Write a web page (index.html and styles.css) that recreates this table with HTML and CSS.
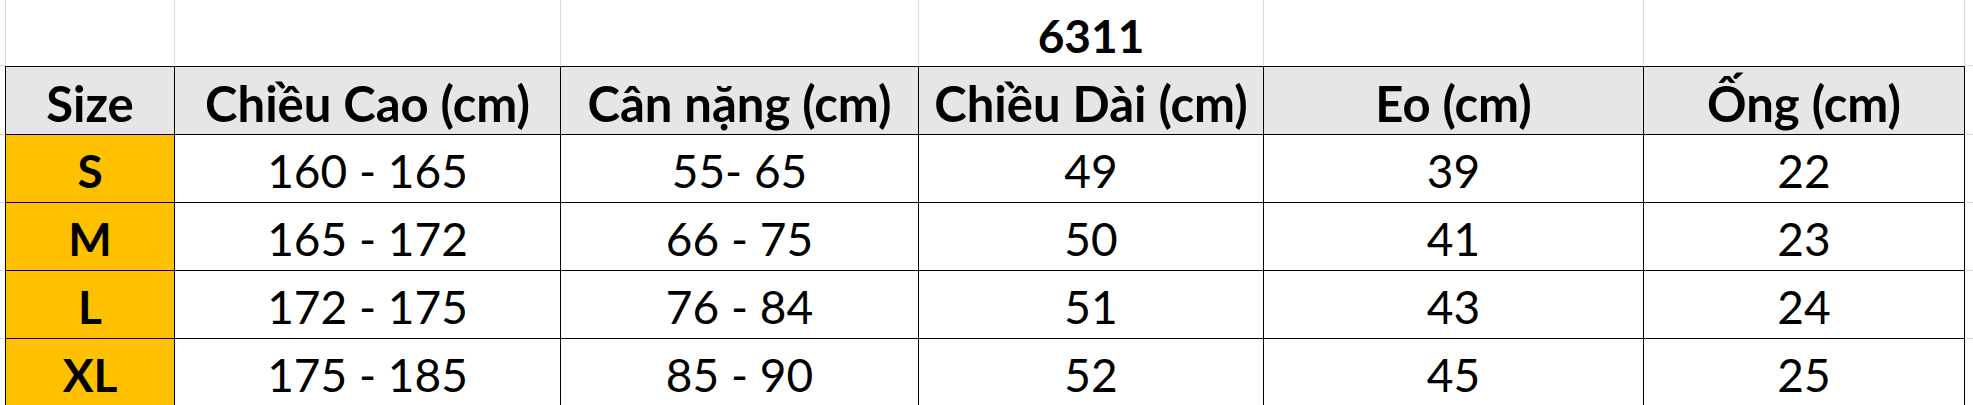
FILE: index.html
```html
<!DOCTYPE html>
<html lang="vi">
<head>
<meta charset="utf-8">
<title>6311 size chart</title>
<link rel="stylesheet" href="styles.css">
</head>
<body>
<div class="sheet">
  <div class="gut"></div>
  <div class="top top-first"></div>
  <div class="top"></div>
  <div class="top"></div>
  <div class="top title">6311</div>
  <div class="top"></div>
  <div class="top"></div>
  <div class="gut"></div>

  <div class="gut"></div>
  <div class="cell hdr first">Size</div>
  <div class="cell hdr">Chiều Cao (cm)</div>
  <div class="cell hdr">Cân nặng (cm)</div>
  <div class="cell hdr">Chiều Dài (cm)</div>
  <div class="cell hdr">Eo (cm)</div>
  <div class="cell hdr">Ống (cm)</div>
  <div class="gut"></div>

  <div class="gut"></div>
  <div class="cell size first">S</div>
  <div class="cell">160 - 165</div>
  <div class="cell">55- 65</div>
  <div class="cell">49</div>
  <div class="cell">39</div>
  <div class="cell">22</div>
  <div class="gut"></div>

  <div class="gut"></div>
  <div class="cell size first">M</div>
  <div class="cell">165 - 172</div>
  <div class="cell">66 - 75</div>
  <div class="cell">50</div>
  <div class="cell">41</div>
  <div class="cell">23</div>
  <div class="gut"></div>

  <div class="gut"></div>
  <div class="cell size first">L</div>
  <div class="cell">172 - 175</div>
  <div class="cell">76 - 84</div>
  <div class="cell">51</div>
  <div class="cell">43</div>
  <div class="cell">24</div>
  <div class="gut"></div>

  <div class="gut"></div>
  <div class="cell size first">XL</div>
  <div class="cell">175 - 185</div>
  <div class="cell">85 - 90</div>
  <div class="cell">52</div>
  <div class="cell">45</div>
  <div class="cell">25</div>
  <div class="gut"></div>
</div>
</body>
</html>
```

FILE: styles.css
```css
* {
  box-sizing: border-box;
}

html, body {
  margin: 0;
  padding: 0;
  background: #ffffff;
}

body {
  overflow: hidden;
  height: 405px;
}

.sheet {
  display: grid;
  grid-template-columns: 5px 170px 386px 358px 345px 380px 321px 1fr;
  grid-template-rows: 66px 69px 68px 68px 68px 68px;
  font-family: Lato, "Noto Sans", sans-serif;
  font-size: 46px;
  color: #000000;
}

.sheet > div {
  display: flex;
  justify-content: center;
  align-items: flex-end;
  line-height: 1;
  white-space: nowrap;
}

.gut {
  border-bottom: 1px solid #d9d9d9;
}

.top {
  border-right: 1px solid #d9d9d9;
  padding-bottom: 7px;
}

.top-first {
  border-left: 1px solid #d9d9d9;
}

.title {
  font-weight: 700;
}

.cell {
  border-right: 1px solid #000000;
  border-bottom: 1px solid #000000;
  padding-bottom: 8px;
}

.first {
  border-left: 1px solid #000000;
}

.hdr {
  border-top: 1px solid #000000;
  background: #e7e6e6;
  font-weight: 700;
  font-size: 49px;
  padding-bottom: 6px;
}

.size {
  background: #ffc000;
  font-weight: 700;
}
```
